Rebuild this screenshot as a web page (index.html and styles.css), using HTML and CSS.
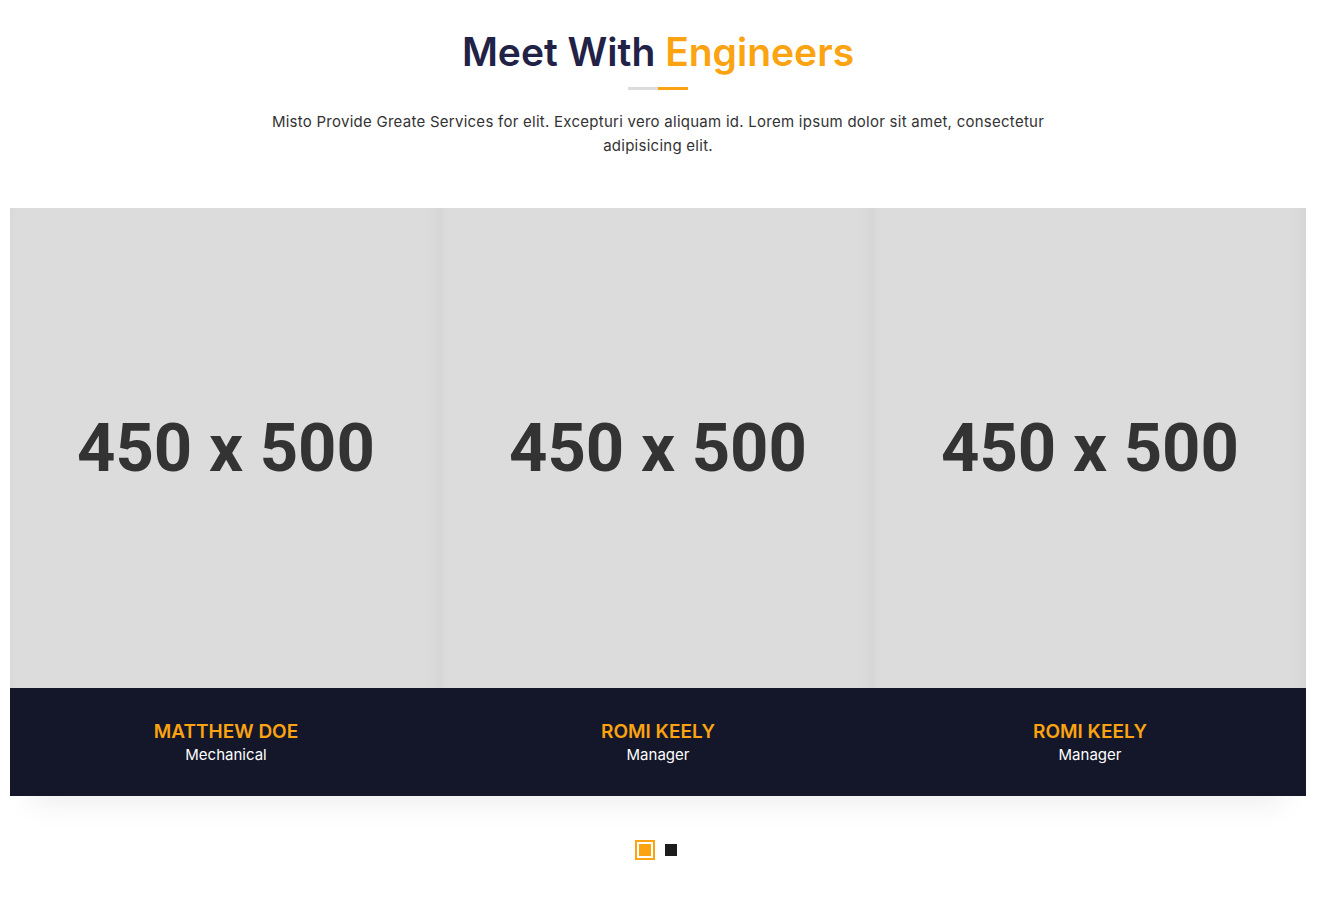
FILE: index.html
```html
<!DOCTYPE html>
<html lang="en">
<head>
<meta charset="utf-8">
<title>Meet With Engineers</title>
<link rel="stylesheet" href="styles.css">
</head>
<body>
<section class="team">
  <div class="team-head">
    <h2 class="title">Meet With <span class="accent">Engineers</span></h2>
    <div class="divider"><span class="d-gray"></span><span class="d-orange"></span></div>
    <p class="intro">Misto Provide Greate Services for elit. Excepturi vero aliquam id. Lorem ipsum dolor sit amet, consectetur adipisicing elit.</p>
  </div>
  <div class="cards">
    <div class="card">
      <div class="photo"><span>450 x 500</span></div>
      <div class="info">
        <h3 class="name">MATTHEW DOE</h3>
        <p class="role">Mechanical</p>
      </div>
    </div>
    <div class="card">
      <div class="photo"><span>450 x 500</span></div>
      <div class="info">
        <h3 class="name">ROMI KEELY</h3>
        <p class="role">Manager</p>
      </div>
    </div>
    <div class="card">
      <div class="photo"><span>450 x 500</span></div>
      <div class="info">
        <h3 class="name">ROMI KEELY</h3>
        <p class="role">Manager</p>
      </div>
    </div>
  </div>
  <div class="dots">
    <span class="dot active"></span>
    <span class="dot"></span>
  </div>
</section>
</body>
</html>
```
FILE: styles.css
```css
* { box-sizing: border-box; }
html, body { margin: 0; padding: 0; background: #fff; }
body { font-family: Inter, Roboto, "Liberation Sans", sans-serif; color: #333; }

.team {
  width: 1316px;
  padding: 27px 10px 0;
}
.team-head { text-align: center; }
.title {
  margin: 0;
  font-size: 39px;
  line-height: 50px;
  font-weight: 600;
  color: #212246;
}
.accent { color: #fba311; }
.divider {
  display: flex;
  justify-content: center;
  margin-top: 10px;
  height: 3px;
}
.d-gray { width: 30px; height: 3px; background: #dcdcdc; }
.d-orange { width: 30px; height: 3px; background: #fba311; }
.intro {
  margin: 20px auto 0;
  max-width: 800px;
  font-size: 15px;
  line-height: 24px;
  letter-spacing: 0.26px;
  color: #333;
}

.cards {
  display: flex;
  margin-top: 50px;
  box-shadow: 0 30px 28px -22px rgba(0,0,0,0.07);
}
.card { flex: 1 1 0; }
.photo {
  height: 480px;
  background: #dcdcdc;
  display: flex;
  align-items: center;
  justify-content: center;
  box-shadow: inset 6px 0 10px -6px rgba(0,0,0,0.03), inset -16px 0 14px -10px rgba(0,0,0,0.035);
}
.photo span {
  font-family: Roboto, "Liberation Sans", sans-serif;
  font-weight: 700;
  font-size: 67px;
  color: #333;
  margin-top: -1px;
}
.info {
  background: #141729;
  height: 108px;
  text-align: center;
  padding-top: 32px;
}
.name {
  margin: 0;
  font-size: 19px;
  line-height: 24px;
  font-weight: 600;
  color: #fba311;
}
.role {
  margin: 0;
  font-size: 15px;
  line-height: 22px;
  color: #fff;
}

.dots {
  display: flex;
  justify-content: center;
  align-items: center;
  gap: 10px;
  margin-top: 44px;
  padding-right: 4px;
}
.dot { width: 12px; height: 12px; background: #1c1c1c; }
.dot.active {
  width: 20px; height: 20px;
  background: #fba311;
  border: 2px solid #fba311;
  box-shadow: inset 0 0 0 2px #fff;
}
```
